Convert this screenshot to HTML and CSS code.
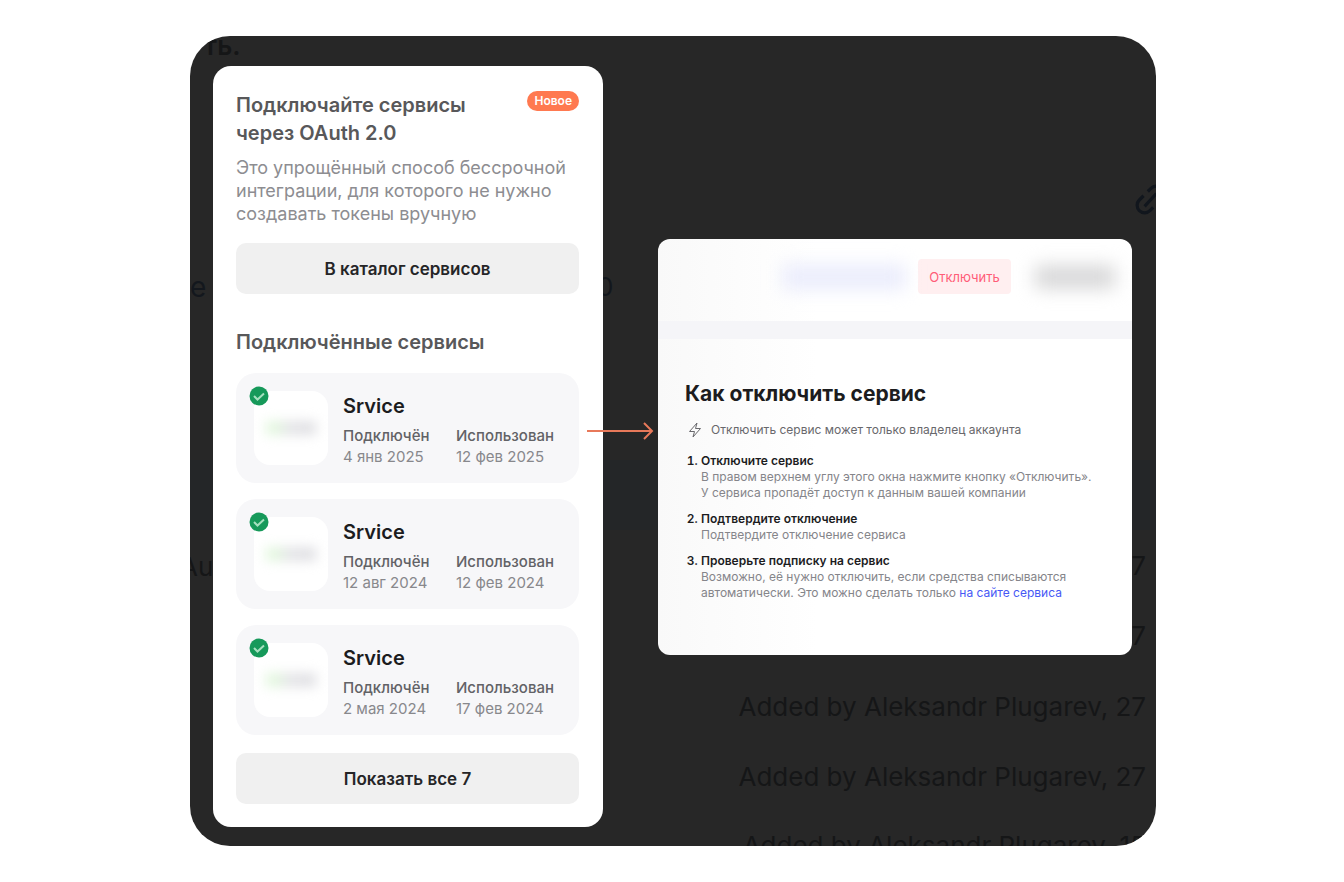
FILE: index.html
```html
<!DOCTYPE html>
<html lang="ru">
<head>
<meta charset="utf-8">
<title>Подключённые сервисы</title>
<meta name="viewport" content="width=device-width, initial-scale=1">
<link rel="stylesheet" href="styles.css">
</head>
<body>
<main class="stage">
  <div class="backdrop" aria-hidden="true">
    <span class="band"></span>
    <span class="ghost ghost-title">ть.</span>
    <span class="ghost ghost-e">е</span>
    <span class="ghost ghost-zero">0</span>
    <span class="ghost ghost-au">Au</span>
    <span class="ghost ghost-day ghost-day-1">7</span>
    <span class="ghost ghost-day ghost-day-2">7</span>
    <span class="ghost ghost-row ghost-row-1">Added by Aleksandr Plugarev, 27</span>
    <span class="ghost ghost-row ghost-row-2">Added by Aleksandr Plugarev, 27</span>
    <span class="ghost ghost-row ghost-row-3">Added by Aleksandr Plugarev, 15</span>
    <svg class="ghost-link" viewBox="0 0 32 32"><path d="M13 8l3-3a7 7 0 0 1 10 10l-4 4M18 23l-3 3A7 7 0 0 1 5 16l4-4M10 22L21 10"/></svg>
  </div>

  <section class="panel">
    <header class="intro">
      <h1 class="title">Подключайте сервисы<br>через OAuth 2.0</h1>
      <span class="badge">Новое</span>
    </header>
    <p class="lead">Это упрощённый способ бессрочной<br>интеграции, для которого не нужно<br>создавать токены вручную</p>
    <button class="button" type="button">В каталог сервисов</button>
    <h2 class="title subtitle">Подключённые сервисы</h2>
    <ul class="services">
      <li class="service">
        <div class="logo"><span class="smudge"></span><svg class="check" viewBox="0 0 20 20"><circle cx="10" cy="10" r="9.500"/><path d="M5 10l3.500 3.500L15 7.500"/></svg></div>
        <div class="info"><h3 class="name">Srvice</h3>
          <dl class="dates"><div><dt>Подключён</dt><dd>4 янв 2025</dd></div><div><dt>Использован</dt><dd>12 фев 2025</dd></div></dl></div>
      </li>
      <li class="service">
        <div class="logo"><span class="smudge"></span><svg class="check" viewBox="0 0 20 20"><circle cx="10" cy="10" r="9.500"/><path d="M5 10l3.500 3.500L15 7.500"/></svg></div>
        <div class="info"><h3 class="name">Srvice</h3>
          <dl class="dates"><div><dt>Подключён</dt><dd>12 авг 2024</dd></div><div><dt>Использован</dt><dd>12 фев 2024</dd></div></dl></div>
      </li>
      <li class="service">
        <div class="logo"><span class="smudge"></span><svg class="check" viewBox="0 0 20 20"><circle cx="10" cy="10" r="9.500"/><path d="M5 10l3.500 3.500L15 7.500"/></svg></div>
        <div class="info"><h3 class="name">Srvice</h3>
          <dl class="dates"><div><dt>Подключён</dt><dd>2 мая 2024</dd></div><div><dt>Использован</dt><dd>17 фев 2024</dd></div></dl></div>
      </li>
    </ul>
    <button class="button" type="button">Показать все 7</button>
  </section>

  <svg class="arrow" viewBox="0 0 68 20" aria-hidden="true"><path d="M1 10H66M58 2l8 8-8 8"/></svg>

  <section class="dialog">
    <header class="toolbar">
      <span class="blot blot-blue"></span>
      <button class="disconnect" type="button">Отключить</button>
      <span class="blot blot-gray"></span>
    </header>
    <div class="guide">
      <h2 class="guide-title">Как отключить сервис</h2>
      <p class="note"><svg class="bolt" viewBox="0 0 14 16"><path d="M9 1L1.500 9.500H6.500L5 15L12.500 6.500H7.500Z"/></svg>Отключить сервис может только владелец аккаунта</p>
      <ol class="steps">
        <li><h3>Отключите сервис</h3><p>В правом верхнем углу этого окна нажмите кнопку «Отключить».<br>У сервиса пропадёт доступ к данным вашей компании</p></li>
        <li><h3>Подтвердите отключение</h3><p>Подтвердите отключение сервиса</p></li>
        <li><h3>Проверьте подписку на сервис</h3><p>Возможно, её нужно отключить, если средства списываются<br>автоматически. Это можно сделать только <a href="#">на сайте сервиса</a></p></li>
      </ol>
    </div>
  </section>
</main>
</body>
</html>
```
FILE: styles.css
```css
* { box-sizing: border-box; }

body {
  margin: 0;
  padding: 36px 188px 36px 190px;
  background: #fff;
  color: #1c1c1e;
  font-family: Inter, "Liberation Sans", sans-serif;
}

h1, h2, h3, p, ul, ol, dl, dd { margin: 0; padding: 0; }

.stage {
  position: relative;
  display: grid;
  grid-template-columns: 390fr 55fr 474fr;
  align-items: start;
  padding: 30px 24px 19px 23px;
  border-radius: 40px;
  background: #272727;
  overflow: hidden;
}

/* Dimmed page behind the panels */
.backdrop { position: absolute; inset: 0; color: #151617; font-size: 26px; line-height: 32px; }
.ghost { position: absolute; white-space: nowrap; }
.band { position: absolute; left: 0; right: 0; top: 424px; height: 70px; background: #242628; }
.ghost-title { left: 14px; top: -6px; font-weight: 600; }
.ghost-e { left: 0; top: 235px; color: #13171d; font-size: 28px; }
.ghost-zero { left: 407px; top: 235px; color: #13171d; }
.ghost-au { left: -10px; top: 515px; }
.ghost-day { right: 10px; }
.ghost-day-1 { top: 514px; }
.ghost-day-2 { top: 584px; }
.ghost-row { right: 10px; }
.ghost-row-1 { top: 655px; }
.ghost-row-2 { top: 725px; }
.ghost-row-3 { top: 794px; }
.ghost-link { position: absolute; right: -12px; top: 147px; width: 34px; height: 34px; fill: none; stroke: #11161d; stroke-width: 3; }

.panel {
  position: relative;
  padding: 25px 24px 23px 23px;
  border-radius: 18px;
  background: #fff;
}

.intro { display: flex; justify-content: space-between; align-items: flex-start; }
.title { font-size: 20px; line-height: 28px; font-weight: 600; color: #58585a; white-space: nowrap; }
.badge { padding: 0 7px; border-radius: 10px; background: #ff7950; color: #fff; font-size: 12px; line-height: 20px; font-weight: 600; }
.lead { margin-top: 9px; font-size: 18px; line-height: 23px; color: #8d8d91; white-space: nowrap; }

.button {
  display: block;
  width: 100%;
  height: 51px;
  margin-top: 18px;
  border: 0;
  border-radius: 10px;
  background: #f0f0f0;
  color: #252527;
  font: 600 17px/24px Inter, "Liberation Sans", sans-serif;
}

.subtitle { margin-top: 34px; }
.services { display: grid; gap: 16px; margin-top: 17px; list-style: none; }
.service { display: flex; align-items: flex-start; gap: 15px; padding: 18px 18px 16px; border-radius: 20px; background: #f7f7f9; }
.logo { position: relative; flex: none; display: grid; place-items: center; width: 74px; height: 74px; border-radius: 16px; background: #fff; }
.smudge { width: 50px; height: 14px; background: linear-gradient(90deg, #e2f7de 20%, #e4e4e7 45%, #dedee2); filter: blur(6px); }
.check { position: absolute; left: -5px; top: -5px; width: 20px; height: 20px; }
.check circle { fill: #16995a; }
.check path { fill: none; stroke: #a5e0bf; stroke-width: 2; }
.info { flex: 1; }
.name { font-size: 20px; line-height: 30px; font-weight: 600; color: #1c1c1e; }
.dates { display: grid; grid-template-columns: 113px 1fr; margin-top: 4px; font-size: 15px; line-height: 21px; color: #88888c; white-space: nowrap; }
.dates dt { font-weight: 500; color: #626266; }

.arrow { position: absolute; left: 396px; top: 385px; z-index: 1; width: 68px; height: 20px; fill: none; stroke: #e8795a; stroke-width: 2; }

.dialog {
  position: relative;
  grid-column: 3;
  margin-top: 173px;
  padding-bottom: 54px;
  border-radius: 12px;
  background: linear-gradient(90deg, #f9f9f9, #fff 160px);
  overflow: hidden;
}

.toolbar { display: flex; justify-content: flex-end; align-items: flex-start; height: 100px; padding: 20px 17px 0 0; border-bottom: 18px solid #f5f5f8; }
.disconnect { width: 93px; height: 35px; padding: 0; border: 0; border-radius: 4px; background: #ffeff0; color: #ff5d78; font: 400 13px/16px Inter, "Liberation Sans", sans-serif; }
.blot { filter: blur(9px); }
.blot-blue { width: 124px; height: 26px; margin: 5px 12px 0 0; background: #ebedfc; }
.blot-gray { width: 80px; height: 24px; margin: 6px 0 0 24px; background: #d8d8d9; }

.guide { padding: 40px 27px 0; white-space: nowrap; }
.guide-title { font-size: 21px; line-height: 30px; font-weight: 700; color: #1c1c1e; }
.note { display: flex; align-items: center; gap: 9px; margin-top: 12px; padding-left: 3px; font-size: 12px; line-height: 18px; color: #68686c; }
.bolt { width: 14px; height: 16px; fill: none; stroke: #68686c; stroke-width: 1; stroke-linejoin: round; }
.steps { display: grid; gap: 10px; margin-top: 14px; padding-left: 16px; font-size: 12px; line-height: 16px; color: #85858a; }
.steps li::marker { color: #1c1c1e; font-weight: 600; }
.steps h3 { font-size: 12px; line-height: 16px; font-weight: 600; color: #1c1c1e; }
.steps a { color: #4658f5; text-decoration: none; }
```
